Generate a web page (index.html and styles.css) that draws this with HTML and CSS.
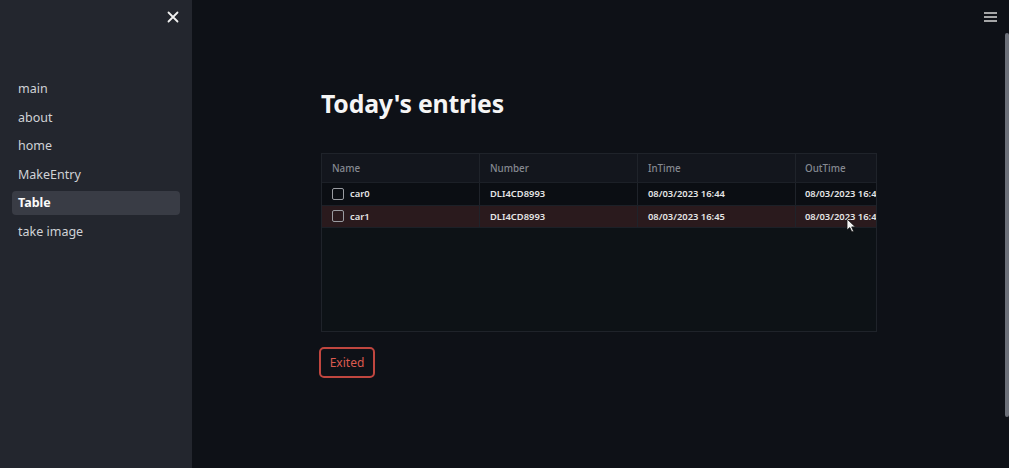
FILE: index.html
```html
<!DOCTYPE html>
<html>
<head>
<meta charset="utf-8">
<link rel="stylesheet" href="styles.css">
</head>
<body>
<div class="app">
  <aside class="sidebar">
    <div class="sb-top">
      <svg class="close" width="12" height="12" viewBox="0 0 12 12"><path d="M1.5 1.5 L10.5 10.5 M10.5 1.5 L1.5 10.5" stroke="#f0f0f0" stroke-width="1.8" stroke-linecap="round"/></svg>
    </div>
    <nav class="nav">
      <a class="nav-item">main</a>
      <a class="nav-item">about</a>
      <a class="nav-item">home</a>
      <a class="nav-item">MakeEntry</a>
      <a class="nav-item active">Table</a>
      <a class="nav-item">take image</a>
    </nav>
  </aside>
  <main class="main">
    <div class="menu-btn">
      <svg width="13" height="10" viewBox="0 0 13 10"><path d="M0 1 H13 M0 5 H13 M0 9 H13" stroke="#d8d8d8" stroke-width="1.6"/></svg>
    </div>
    <div class="content">
      <h1 class="title">Today's entries</h1>
      <div class="table">
        <div class="row head">
          <div class="cell c1">Name</div>
          <div class="cell c2">Number</div>
          <div class="cell c3">InTime</div>
          <div class="cell c4">OutTime</div>
        </div>
        <div class="row">
          <div class="cell c1"><span class="cb"></span>car0</div>
          <div class="cell c2">DLI4CD8993</div>
          <div class="cell c3">08/03/2023 16:44</div>
          <div class="cell c4">08/03/2023 16:4</div>
        </div>
        <div class="row hl">
          <div class="cell c1"><span class="cb"></span>car1</div>
          <div class="cell c2">DLI4CD8993</div>
          <div class="cell c3">08/03/2023 16:45</div>
          <div class="cell c4">08/03/2023 16:4</div>
        </div>
        <div class="empty"></div>
        <svg class="cursor" width="12" height="16" viewBox="0 0 12 16"><path d="M1 1 L1 12 L3.8 9.6 L5.8 14 L7.6 13.2 L5.7 8.9 L9.4 8.9 Z" fill="#f4f4f4" stroke="#111" stroke-width="0.8"/></svg>
      </div>
      <button class="btn">Exited</button>
    </div>
    <div class="scrollbar"></div>
  </main>
</div>
</body>
</html>
```
FILE: styles.css
```css
* { box-sizing: border-box; }
html, body { margin: 0; padding: 0; height: 100%; }
body {
  background: #0e1117;
  font-family: "Noto Sans", "Open Sans", sans-serif;
  color: #fafafa;
  overflow: hidden;
}
.app { display: flex; height: 468px; }
.sidebar {
  width: 192px;
  flex: none;
  background: #23262e;
  padding: 0 12px;
}
.sb-top { display: flex; justify-content: flex-end; padding: 11px 1px 0 0; height: 77px; }
.close { display: block; }
.nav { display: flex; flex-direction: column; gap: 4.5px; }
.nav-item {
  display: block;
  height: 24px;
  line-height: 24px;
  padding: 0 6px;
  font-size: 12.5px;
  color: #d0d2d6;
  border-radius: 4px;
}
.nav-item.active {
  background: #393c45;
  color: #fafafa;
  font-weight: 700;
}
.main { flex: 1; position: relative; }
.menu-btn { position: absolute; top: 12px; right: 12px; line-height: 0; }
.scrollbar {
  position: absolute;
  right: 0;
  top: 33px;
  width: 4px;
  height: 384px;
  background: #6c7079;
  border-radius: 2px;
}
.content { padding: 80px 0 0 129px; }
.title {
  margin: 0;
  font-size: 24.8px;
  font-weight: 700;
  line-height: 46px;
  color: #f5f5f5;
  letter-spacing: -0.2px;
}
.table {
  position: relative;
  margin-top: 27px;
  width: 556px;
  border: 1px solid #1f232a;
  background: #0d1216;
  overflow: hidden;
}
.row { display: flex; height: 22.5px; border-bottom: 1px solid #1c2027; background: #0b0e13; }
.row.head { height: 29px; background: #13161d; }
.row.hl { background: #2a1a1d; }
.cell {
  display: flex;
  align-items: center;
  flex: none;
  width: 158px;
  padding-left: 10px;
  font-size: 9.4px;
  font-weight: 600;
  color: #e6e6e6;
  border-right: 1px solid #1f232a;
  white-space: nowrap;
  overflow: hidden;
}
.head .cell { color: #858991; font-weight: 500; font-size: 9.8px; }
.cell.c1 { padding-left: 10px; }
.cell.c4 { width: 83px; border-right: 0; padding-left: 9px; }
.cb {
  width: 12px; height: 12px;
  border: 1.5px solid #9a9ca1;
  border-radius: 2px;
  margin-right: 6px;
  flex: none;
}
.empty { height: 103px; }
.cursor { position: absolute; left: 524px; top: 64px; }
.btn {
  margin-top: 15px;
  margin-left: -2px;
  height: 31px;
  width: 56px;
  padding: 0;
  background: #0e1117;
  border: 2px solid #c0463f;
  border-radius: 5px;
  color: #dc5a4f;
  font-family: inherit;
  font-size: 12px;
}
```
